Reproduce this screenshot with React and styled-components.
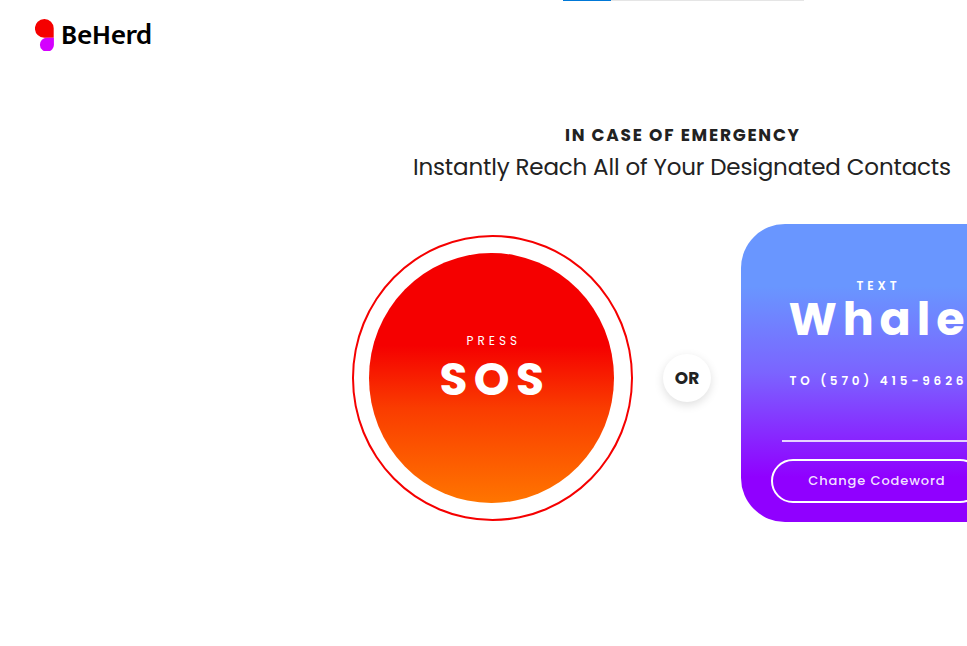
import React from 'react';
import styled, { createGlobalStyle } from 'styled-components';

const GlobalStyle = createGlobalStyle`
  *, *::before, *::after { box-sizing: border-box; }
  html, body { margin: 0; overflow: hidden; background: #fff; }
  body {
    font-family: Poppins, Inter, sans-serif;
    font-feature-settings: 'cv11';
    color: #222;
  }
  button { font: inherit; font-feature-settings: inherit; color: inherit; border: 0; padding: 0; cursor: pointer; }
`;

const Page = styled.div`
  width: 1366px;
  height: 646px;
  display: flex;
  flex-direction: column;
`;

const Progress = styled.div`
  width: 241px;
  height: 1px;
  margin-left: 563px;
  background: #e5e5e5;
`;

const ProgressValue = styled.div`
  width: 20%;
  height: 1px;
  background: #0078d7;
`;

const Header = styled.header`
  height: 68px;
  padding: 0 35px;
  display: flex;
  align-items: center;
  gap: 6px;
`;

const LogoMark = styled.svg`
  display: block;
  width: 20px;
  height: 32px;
`;

const Brand = styled.span`
  font-family: Mukta, 'Noto Sans', sans-serif;
  font-size: 29px;
  font-weight: 600;
  line-height: 32px;
  color: #000;
`;

const Spaced = styled.span`
  display: block;
  white-space: nowrap;
  font-size: ${(p) => p.$size}px;
  font-weight: ${(p) => p.$weight};
  line-height: ${(p) => p.$line}px;
  letter-spacing: ${(p) => p.$track}px;
  margin-right: ${(p) => -p.$track}px;
`;

const Intro = styled.section`
  width: 1364px;
  padding-top: 53px;
  display: flex;
  flex-direction: column;
  align-items: center;
`;

const Actions = styled.main`
  display: flex;
  align-items: flex-start;
  padding: 38px 0 0 351.5px;
`;

const SosRing = styled.div`
  width: 281.5px;
  height: 286px;
  margin-top: 11.4px;
  padding: 16px 17.5px 16.5px 15.5px;
  border: 2px solid #f50000;
  border-radius: 50%;
  display: flex;
`;

const SosButton = styled.button`
  flex: 1;
  border-radius: 50%;
  color: #fff;
  background: linear-gradient(180deg, #f50000 0%, #f50000 37%, #fa3c00 62%, #ff7500 100%);
  display: flex;
  flex-direction: column;
  align-items: center;
  padding: 80px 0 0 1px;
`;

const OrBadge = styled.div`
  width: 48px;
  height: 48px;
  margin: 130.4px 30px 0 30px;
  border-radius: 50%;
  background: #fff;
  box-shadow: 0 3px 10px rgba(0, 0, 0, 0.13);
  display: grid;
  place-items: center;
`;

const Card = styled.section`
  width: 271px;
  height: 298px;
  border-radius: 44px;
  color: #fff;
  background: linear-gradient(180deg, #6996ff 0%, #6996ff 21%, #7b64ff 50%, #9000ff 85%, #9000ff 100%);
  display: flex;
  flex-direction: column;
  align-items: center;
  padding-top: 54px;
`;

const PhoneLine = styled.div`
  margin-top: 28px;
`;

const Divider = styled.hr`
  width: 189px;
  height: 1.5px;
  margin: 51px 0 17.4px;
  border: 0;
  background: rgba(255, 255, 255, 0.8);
`;

const OutlineButton = styled.button`
  width: 211px;
  height: 44px;
  border: 2px solid #fff;
  border-radius: 22px;
  background: transparent;
  color: rgba(255, 255, 255, 0.9);
  display: flex;
  align-items: center;
  justify-content: center;
`;

export default function App() {
  return (
    <Page>
      <GlobalStyle />
      <Progress><ProgressValue /></Progress>
      <Header>
        <LogoMark viewBox="0 0 20 32">
          <path d="M9.3 0A9.3 9.3 0 0 1 18.7 9.4V18.7H9.3A9.35 9.35 0 0 1 9.3 0Z" fill="#f50000" />
          <path d="M12 18.7H18.9V25A7 7 0 1 1 12 18.7Z" fill="#d400ff" />
        </LogoMark>
        <Brand>BeHerd</Brand>
      </Header>
      <Intro>
        <Spaced $size={17} $weight={700} $line={26} $track={1.75}>IN CASE OF EMERGENCY</Spaced>
        <Spaced $size={23} $weight={400} $line={38} $track={-0.16}>Instantly Reach All of Your Designated Contacts</Spaced>
      </Intro>
      <Actions>
        <SosRing>
          <SosButton>
            <Spaced $size={12} $weight={400} $line={16} $track={4}>PRESS</Spaced>
            <Spaced $size={45.5} $weight={700} $line={60} $track={6.4}>SOS</Spaced>
          </SosButton>
        </SosRing>
        <OrBadge>
          <Spaced $size={17} $weight={700} $line={24} $track={0}>OR</Spaced>
        </OrBadge>
        <Card>
          <Spaced $size={12} $weight={600} $line={16} $track={3.9}>TEXT</Spaced>
          <Spaced $size={46} $weight={700} $line={51} $track={5.9}>Whale</Spaced>
          <PhoneLine>
            <Spaced $size={12} $weight={600} $line={16} $track={3.85}>TO (570) 415-9626</Spaced>
          </PhoneLine>
          <Divider />
          <OutlineButton>
            <Spaced $size={13} $weight={500} $line={20} $track={0.88}>Change Codeword</Spaced>
          </OutlineButton>
        </Card>
      </Actions>
    </Page>
  );
}
